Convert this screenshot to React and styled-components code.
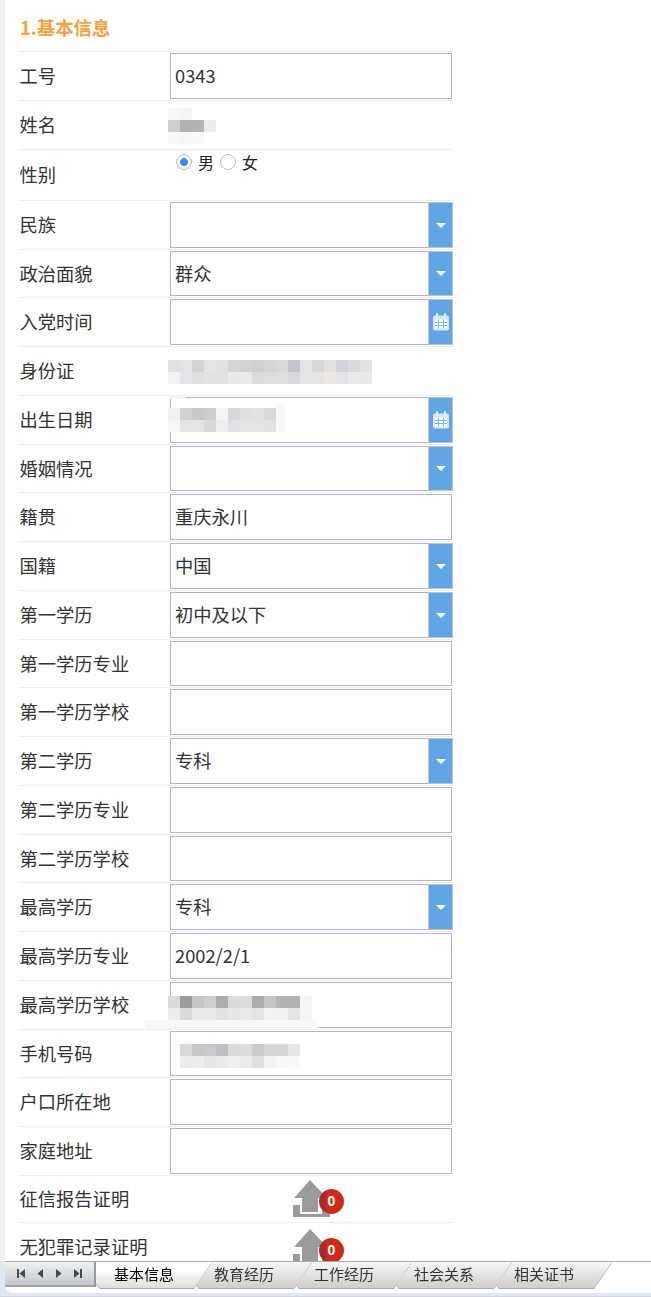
import React from "react"
import styled, { createGlobalStyle } from "styled-components"

const GlobalStyle = createGlobalStyle`
  html, body {
    margin: 0;
    padding: 0;
    background: #fff;
  }
  body {
    font-family: "Noto Sans CJK SC", "Noto Sans", sans-serif;
    color: #333;
  }
`

const Page = styled.div`
  width: 651px;
  height: 1297px;
  display: flex;
  flex-direction: column;
  overflow: hidden;
  background: #fff;
`

const Scroller = styled.div`
  flex: 1;
  min-height: 0;
  overflow: hidden;
  border-left: 5px solid #f1f1f1;
  padding: 0 0 0 13px;
`

const Form = styled.div`
  width: 435px;
`

const Heading = styled.h2`
  margin: 0;
  height: 51px;
  padding: 14px 0 0 2px;
  box-sizing: border-box;
  font-size: 18.4px;
  line-height: 26px;
  font-weight: 700;
  color: #f5a13e;
`

const Row = styled.div`
  box-sizing: border-box;
  height: ${p => p.$h}px;
  border-top: 1px solid #eeeeee;
  display: flex;
  align-items: center;
  position: relative;
`

const Label = styled.div`
  width: 152px;
  padding: 0 0 2px 1.5px;
  box-sizing: border-box;
  flex: none;
  font-size: 18.3px;
  color: #333;
  white-space: nowrap;
`

const Field = styled.div`
  position: relative;
  align-self: flex-start;
  margin-top: 1px;
  width: 282px;
  height: ${p => p.$h - 3}px;
  box-sizing: border-box;
  border: 1px solid #b3b3c7;
  display: flex;
  background: #fff;
`

const Input = styled.input`
  flex: 1;
  min-width: 0;
  height: 100%;
  border: 0;
  outline: 0;
  padding: 0 4px 2px;
  margin: 0;
  box-sizing: border-box;
  background: transparent;
  font: 18.3px "Noto Sans CJK SC", "Noto Sans", sans-serif;
  color: #333;
`

const AddOn = styled.div`
  width: 25px;
  flex: none;
  margin: -1px -2px -1px 0;
  background: #62a5e4;
  border: 1px solid #b9c3cd;
  border-left: 1px solid #c8c8d0;
  box-sizing: border-box;
  display: flex;
  align-items: center;
  justify-content: center;
`

const Caret = styled.span`
  width: 0;
  height: 0;
  margin-left: 1px;
  border-left: 5.5px solid transparent;
  border-right: 5.5px solid transparent;
  border-top: 5px solid #fff;
`

const RadioLine = styled.div`
  align-self: flex-start;
  margin: 2px 0 0 6px;
  display: flex;
  align-items: center;
  font-size: 16px;
  line-height: 20px;
  color: #222;
`

const Radio = styled.span`
  width: 16px;
  height: 16px;
  box-sizing: border-box;
  border-radius: 50%;
  border: 1.5px solid #b8bcc2;
  background: ${p => p.$on ? "radial-gradient(circle, #4a86e8 0 3.6px, #fff 4.2px)" : "#fff"};
  margin-right: 6px;
`

const OptionText = styled.span`
  margin-right: 6px;
`

const MosaicGrid = styled.div`
  display: grid;
  grid-template-columns: repeat(${p => p.$cols}, 12px);
  grid-auto-rows: 12px;
  position: absolute;
  left: ${p => p.$x}px;
  top: ${p => p.$y}px;
  z-index: 2;
`

const Cell = styled.i`
  display: block;
  background: ${p => p.$c};
`

const Smear = styled.div`
  position: absolute;
  left: ${p => p.$x}px;
  top: ${p => p.$y}px;
  width: ${p => p.$w}px;
  height: ${p => p.$h}px;
  background: rgba(248, 248, 250, 0.95);
  z-index: 1;
`

const UploadSlot = styled.div`
  margin-left: 122px;
  display: flex;
  align-items: center;
  align-self: flex-start;
  padding-top: ${p => p.$top}px;
`

const BadgeWrap = styled.div`
  position: relative;
  width: 38px;
  height: 38px;
`

const Badge = styled.span`
  position: absolute;
  left: 27px;
  top: 9px;
  width: 25px;
  height: 25px;
  border-radius: 50%;
  background: linear-gradient(90deg, #a92a20 0 30%, #cf2a1c 30%);
  color: #fff;
  font: 700 14px/24px "Liberation Sans", sans-serif;
  text-align: center;
`

const TabBar = styled.div`
  flex: none;
  height: 36px;
  background: #dfe8f2;
  display: flex;
  align-items: flex-start;
  border-bottom: 1px solid #cdd6e0;
  box-sizing: border-box;
`

const TabInner = styled.div`
  flex: 1;
  height: 32px;
  background: #fff;
  border-top: 1px solid #a9a9a9;
  margin-left: 5px;
  border-bottom-left-radius: 8px;
  box-sizing: border-box;
  display: flex;
  align-items: flex-start;
`

const Pager = styled.div`
  width: 91px;
  height: 25px;
  box-sizing: border-box;
  flex: none;
  display: flex;
  align-items: center;
  justify-content: space-around;
  padding: 0 6px;
  background: linear-gradient(#f0f0f0, #c6c9cc);
  border-right: 2px solid #9a9a9a;
  border-bottom: 2px solid #a5a5a5;
`

const Tabs = styled.div`
  display: flex;
  filter: drop-shadow(0 1px 0 #a8a8a8);
`

const Tab = styled.div`
  width: 116px;
  height: 26px;
  margin-right: -16px;
  box-sizing: border-box;
  padding-left: 18px;
  font-size: 15px;
  line-height: 24px;
  color: ${p => p.$active ? "#000" : "#333"};
  background: ${p => p.$active
    ? "linear-gradient(#fff 30%, #dedede)"
    : "linear-gradient(#f6f6f6, #cfcfcf)"};
  clip-path: ${p => p.$active
    ? "polygon(0 0, 116px 0, 98px 100%, 4px 100%, 0 22px)"
    : "polygon(18px 0, 116px 0, 98px 100%, 3px 100%, 0 22px)"};
`

const PagerIcon = ({ d }) => (
  <svg width="10" height="11" viewBox="0 0 10 11" fill="#3d4a5a">
    <path d={d} />
  </svg>
)

const CalendarIcon = () => (
  <svg width="16" height="18" viewBox="0 0 16 18">
    <rect x="0" y="2.5" width="16" height="15" rx="2" fill="#d6e7f8" />
    <rect x="3" y="0" width="2" height="5" rx="1" fill="#e8f2fb" />
    <rect x="11" y="0" width="2" height="5" rx="1" fill="#e8f2fb" />
    <path d="M2 6.5h12v9H2z" fill="#fff" />
    <path d="M2 9.5h12M2 12.5h12M5.5 6.5v9M10.5 6.5v9" stroke="#7fb4e8" strokeWidth="1" />
  </svg>
)

const UploadIcon = () => (
  <svg width="38" height="38" viewBox="0 0 38 38" fill="#9b9b9b">
    <path d="M18 0 L35 18 H26 V32 H10 V18 H2 Z" />
    <path d="M1 25 H8 V34 H30 V25 H38 V37 H1 Z" />
  </svg>
)

const Mosaic = ({ x, y, cols, cells }) => (
  <MosaicGrid $x={x} $y={y} $cols={cols}>
    {cells.map((c, i) => <Cell key={i} $c={c} />)}
  </MosaicGrid>
)

const Upload = ({ top }) => (
  <UploadSlot $top={top}>
    <BadgeWrap>
      <UploadIcon />
      <Badge>0</Badge>
    </BadgeWrap>
  </UploadSlot>
)

const rows = [
  { label: "工号", h: 49, type: "input", value: "0343" },
  { label: "姓名", h: 49, type: "name" },
  { label: "性别", h: 51, type: "radio" },
  { label: "民族", h: 49, type: "select" },
  { label: "政治面貌", h: 48, type: "select", value: "群众" },
  { label: "入党时间", h: 49, type: "date" },
  { label: "身份证", h: 49, type: "id" },
  { label: "出生日期", h: 49, type: "birth" },
  { label: "婚姻情况", h: 48, type: "select" },
  { label: "籍贯", h: 49, type: "input", value: "重庆永川" },
  { label: "国籍", h: 49, type: "select", value: "中国" },
  { label: "第一学历", h: 49, type: "select", value: "初中及以下" },
  { label: "第一学历专业", h: 48, type: "input" },
  { label: "第一学历学校", h: 49, type: "input" },
  { label: "第二学历", h: 49, type: "select", value: "专科" },
  { label: "第二学历专业", h: 49, type: "input" },
  { label: "第二学历学校", h: 48, type: "input" },
  { label: "最高学历", h: 49, type: "select", value: "专科" },
  { label: "最高学历专业", h: 49, type: "input", value: "2002/2/1" },
  { label: "最高学历学校", h: 49, type: "school" },
  { label: "手机号码", h: 48, type: "phone" },
  { label: "户口所在地", h: 49, type: "input" },
  { label: "家庭地址", h: 49, type: "input" },
  { label: "征信报告证明", h: 47, type: "upload", top: 4 },
  { label: "无犯罪记录证明", h: 49, type: "upload", top: 6 },
]

const nameCells = [
  "#f7f7f7", "#f5f5f5", "#ffffff", "#ffffff",
  "#d2cdcb", "#b2b2b2", "#b4b4b4", "#ecedef",
  "#f9f9f9", "#f7f7f7", "#f9f9f9", "#ffffff",
]

const idCells = [
  "#e3e1de", "#e2e4e8", "#d2d2d2", "#e3e6e6", "#e4e1dc", "#d4d6d9", "#d3d3d4", "#d0d0d0", "#d5d5d5",
  "#dad9d6", "#c5c6cb", "#e3e4e4", "#d7d7d7", "#e3e0de", "#d2d2d8", "#dadada", "#e0e2e4",
  "#f3f2f0", "#e3e4e8", "#e0e0e0", "#e2e2e2", "#e1e1e1", "#e9e9e9", "#eaeaea", "#dcdcdc", "#dddddd",
  "#dfdedc", "#d8d9dc", "#e4e6e6", "#e3e5e5", "#ece8e4", "#e2e3e7", "#e9eaeb", "#e8eaea",
]

const birthCells = [
  "#f2f1ef", "#cfd1d5", "#c9c9c9", "#cdcdcd", "#f5f4f0", "#d6d8db", "#dfe0e3", "#e4e2df", "#d8d9dd",
  "#f7f6f5", "#e2e3e5", "#e3e5e4", "#d8d7d5", "#eeefed", "#dfe1e5", "#e4e4e4", "#e3e3e3", "#e2e2e2",
]

const schoolCells = [
  "#dcdad8", "#9a9c9e", "#c8c5c5", "#cdced2", "#aeabad", "#d6dad9", "#dbdcdd", "#aeacad", "#c8c6c4", "#b3b4b7", "#b3b3b3", "#f4f5f7",
  "#ececec", "#d9dbd9", "#ebebec", "#ebebe9", "#e1e1e2", "#e6e6e7", "#eaeaeb", "#e4e4e5", "#f3f2f0", "#f0f1f3", "#e3e3e3", "#f5f5f5",
]

const phoneCells = [
  "#d8d9dc", "#c8c8c9", "#cdc9c9", "#bcc0c6", "#d8d9da", "#dcdbd8", "#c8cacd", "#d4d4d4", "#d4d4d4", "#e6e7e9",
  "#ececec", "#ededed", "#e6e6e6", "#e9ebec", "#efefef", "#ececea", "#e0e0e0", "#f2f2f2", "#f7f7f7", "#fafafa",
]

const renderValue = row => {
  switch (row.type) {
    case "input":
      return <Field $h={row.h}><Input readOnly value={row.value || ""} /></Field>
    case "select":
      return (
        <Field $h={row.h}>
          <Input readOnly value={row.value || ""} />
          <AddOn><Caret /></AddOn>
        </Field>
      )
    case "date":
      return <Field $h={row.h}><Input readOnly value="" /><AddOn><CalendarIcon /></AddOn></Field>
    case "birth":
      return (
        <>
          <Field $h={row.h}><Input readOnly value="" /><AddOn><CalendarIcon /></AddOn></Field>
          <Smear $x={150} $y={0} $w={17} $h={3} />
          <Smear $x={258} $y={8} $w={10} $h={28} />
          <Mosaic x={150} y={12} cols={9} cells={birthCells} />
        </>
      )
    case "name":
      return <Mosaic x={150} y={7} cols={4} cells={nameCells} />
    case "id":
      return <Mosaic x={150} y={13} cols={17} cells={idCells} />
    case "radio":
      return (
        <RadioLine>
          <Radio $on />
          <OptionText>男</OptionText>
          <Radio />
          <OptionText>女</OptionText>
        </RadioLine>
      )
    case "school":
      return (
        <>
          <Field $h={row.h}><Input readOnly value="" /></Field>
          <Smear $x={127} $y={39} $w={173} $h={9} />
          <Mosaic x={150} y={15} cols={12} cells={schoolCells} />
        </>
      )
    case "phone":
      return (
        <>
          <Field $h={row.h}><Input readOnly value="" /></Field>
          <Mosaic x={162} y={14} cols={10} cells={phoneCells} />
        </>
      )
    case "upload":
      return <Upload top={row.top} />
    default:
      return null
  }
}

const tabNames = ["基本信息", "教育经历", "工作经历", "社会关系", "相关证书"]

const App = () => (
  <Page>
    <GlobalStyle />
    <Scroller>
      <Form>
        <Heading>1.基本信息</Heading>
        {rows.map(row => (
          <Row key={row.label} $h={row.h}>
            <Label>{row.label}</Label>
            {renderValue(row)}
          </Row>
        ))}
      </Form>
    </Scroller>
    <TabBar>
      <TabInner>
        <Pager>
          <PagerIcon d="M1 1h2v9H1zM9 1v9L3.5 5.5z" />
          <PagerIcon d="M8 1v9L2.5 5.5z" />
          <PagerIcon d="M2 1v9l5.5-4.5z" />
          <PagerIcon d="M7 1h2v9H7zM1 1v9l5.5-4.5z" />
        </Pager>
        <Tabs>
          {tabNames.map((name, i) => (
            <Tab key={name} $active={i === 0}>{name}</Tab>
          ))}
        </Tabs>
      </TabInner>
    </TabBar>
  </Page>
)

export default App
